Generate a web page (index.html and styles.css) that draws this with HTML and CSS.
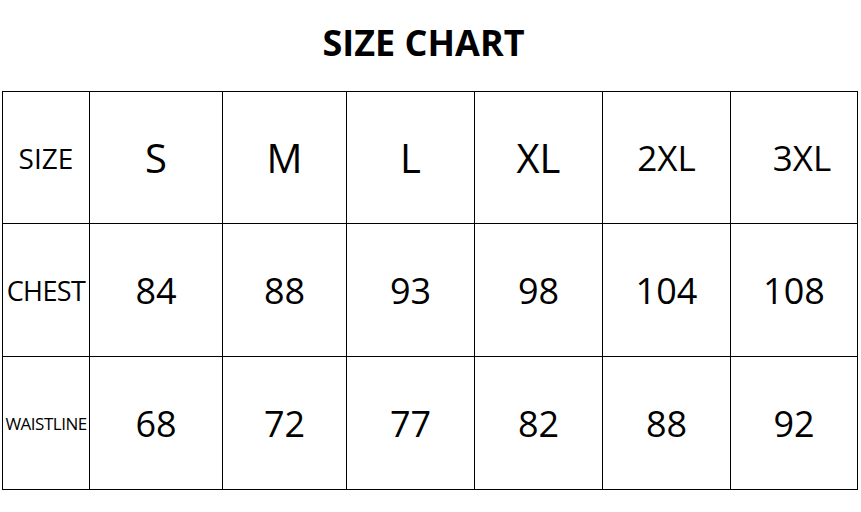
FILE: index.html
```html
<!DOCTYPE html>
<html>
<head>
<meta charset="utf-8">
<link rel="stylesheet" href="styles.css">
</head>
<body>
<h1 class="title">SIZE CHART</h1>
<table class="chart">
  <colgroup>
    <col class="c0"><col class="c1"><col class="c2"><col class="c3"><col class="c4"><col class="c5"><col class="c6">
  </colgroup>
  <tr class="r1">
    <th class="label wide">SIZE</th>
    <td class="big">S</td>
    <td class="big">M</td>
    <td class="big">L</td>
    <td class="big">XL</td>
    <td class="mid">2XL</td>
    <td class="mid shift">3XL</td>
  </tr>
  <tr class="r2">
    <th class="label">CHEST</th>
    <td class="num">84</td>
    <td class="num">88</td>
    <td class="num">93</td>
    <td class="num">98</td>
    <td class="num">104</td>
    <td class="num">108</td>
  </tr>
  <tr class="r3">
    <th class="label small">WAISTLINE</th>
    <td class="num">68</td>
    <td class="num">72</td>
    <td class="num">77</td>
    <td class="num">82</td>
    <td class="num">88</td>
    <td class="num">92</td>
  </tr>
</table>
</body>
</html>
```
FILE: styles.css
```css
html, body {
  margin: 0;
  padding: 0;
  background: #fff;
  color: #000;
  font-family: "Open Sans", "Noto Sans", sans-serif;
}
.title {
  margin: 0;
  padding: 21px 14px 0 0;
  height: 91px;
  box-sizing: border-box;
  text-align: center;
  font-size: 36px;
  font-weight: 700;
  line-height: 44px;
  letter-spacing: 0;
}
.chart {
  margin-left: 2px;
  border-collapse: collapse;
  table-layout: fixed;
  width: 856px;
}
.c0 { width: 87px; }
.c1 { width: 133px; }
.c2 { width: 124px; }
.c3 { width: 128px; }
.c4 { width: 128px; }
.c5 { width: 128px; }
.c6 { width: 127px; }
.chart th, .chart td {
  border: 1px solid #000;
  padding: 0;
  text-align: center;
  vertical-align: middle;
  font-weight: 400;
  white-space: nowrap;
  overflow: hidden;
}
.r1 { height: 132px; }
.r2 { height: 133px; }
.r3 { height: 133px; }
.label { font-size: 27px; letter-spacing: -0.6px; }
.label.wide { font-size: 28px; letter-spacing: 0; }
.label.small { font-size: 17px; letter-spacing: -0.5px; }
.big { font-size: 40px; }
.mid { font-size: 35px; }
.num { font-size: 36px; }
.shift { padding-left: 16px !important; }
```
